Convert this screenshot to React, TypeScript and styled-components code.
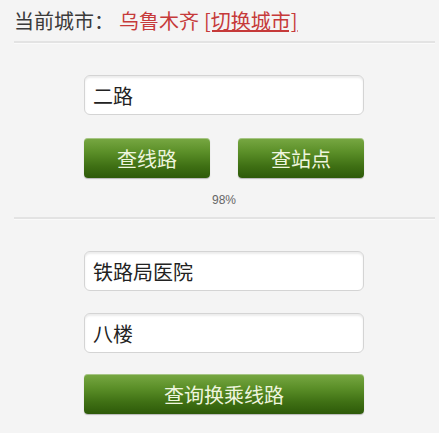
import React from 'react'
import styled, { createGlobalStyle } from 'styled-components'

const GlobalStyle = createGlobalStyle`
  html, body {
    margin: 0;
    padding: 0;
    background: #f4f4f4;
    font-family: "Noto Sans CJK SC", "Liberation Sans", sans-serif;
  }
`

const Page = styled.div`
  width: 439px;
  height: 433px;
  overflow: hidden;
`

const CityBar = styled.div`
  margin: 0 4px 0 14px;
  height: 41px;
  display: flex;
  align-items: center;
  font-size: 20px;
  color: #3a3a3a;
  border-bottom: 2px solid #e3e3e3;
  box-shadow: 0 1px 0 #fafafa;
`

const Label = styled.span`
  margin-right: 5px;
`

const CityName = styled.span`
  color: #c63a3a;
  margin-right: 5px;
`

const SwitchLink = styled.a`
  color: #c63a3a;
  text-decoration: underline;
  cursor: pointer;
`

const Section = styled.div`
  padding: 32px 0 0 84px;
  display: flex;
  flex-direction: column;
  width: 280px;
`

const Field = styled.input<{ $gap?: number }>`
  box-sizing: border-box;
  width: 280px;
  height: 40px;
  margin: 0 0 ${(p) => p.$gap ?? 23}px;
  padding: 0 8px;
  border: 1px solid #d4d4d4;
  border-radius: 6px;
  background: #fff;
  box-shadow: inset 0 2px 2px rgba(0, 0, 0, 0.08);
  font-family: "Noto Sans CJK SC", sans-serif;
  font-size: 20px;
  color: #222;
  outline: none;
`

const ButtonRow = styled.div`
  display: flex;
  justify-content: space-between;
`

const GreenButton = styled.button<{ $wide?: boolean }>`
  box-sizing: border-box;
  width: ${(p) => (p.$wide ? '280px' : '126px')};
  height: 40px;
  border: none;
  border-radius: 4px;
  background: linear-gradient(to bottom, #78a843 0%, #5b8f28 35%, #3f7014 70%, #2d5a09 100%);
  box-shadow: inset 0 1px 0 rgba(255, 255, 255, 0.35), 0 1px 1px rgba(0, 0, 0, 0.25);
  color: #eef5de;
  font-family: "Noto Sans CJK SC", sans-serif;
  font-size: 20px;
  padding: 0;
  cursor: pointer;
`

const Percent = styled.div`
  text-align: center;
  font-size: 12px;
  color: #666;
  padding-top: 15px;
  height: 24px;
  font-family: "Liberation Sans", sans-serif;
`

const Divider = styled.div`
  margin: 0 4px 0 14px;
  height: 0;
  border-top: 2px solid #e3e3e3;
  box-shadow: 0 1px 0 #fafafa;
`

export default function App() {
  return (
    <Page>
      <GlobalStyle />
      <CityBar>
        <Label>当前城市：</Label>
        <CityName>乌鲁木齐</CityName>
        <SwitchLink>[切换城市]</SwitchLink>
      </CityBar>
      <Section>
        <Field defaultValue="二路" />
        <ButtonRow>
          <GreenButton>查线路</GreenButton>
          <GreenButton>查站点</GreenButton>
        </ButtonRow>
        <Percent>98%</Percent>
      </Section>
      <Divider />
      <Section>
        <Field defaultValue="铁路局医院" $gap={22} />
        <Field defaultValue="八楼" $gap={21} />
        <GreenButton $wide>查询换乘线路</GreenButton>
      </Section>
    </Page>
  )
}
